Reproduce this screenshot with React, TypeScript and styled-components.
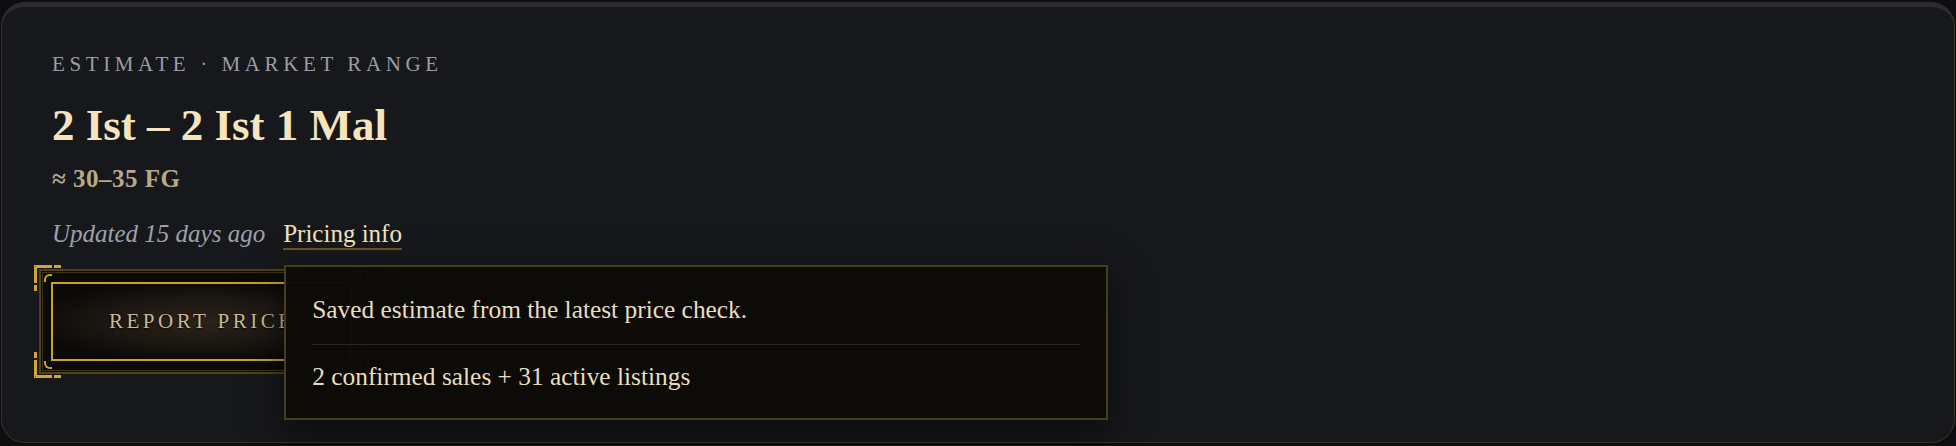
import React from "react";
import styled, { createGlobalStyle } from "styled-components";

const Global = createGlobalStyle`
  html, body { margin: 0; padding: 0; background: #0e0e10; }
  body { font-family: "Liberation Serif", "Times New Roman", serif; }
  * { box-sizing: border-box; }
`;

const Card = styled.section`
  margin: 2px 1px 3px 1px;
  height: 441px;
  background: #17181c;
  border: 1px solid #3a3022;
  border-top: 5px solid #2b2c31;
  border-radius: 24px;
  padding: 45px 50px 0 50px;
  display: flex;
  flex-direction: column;
  align-items: flex-start;
`;

const Eyebrow = styled.div`
  font-size: 21px;
  line-height: 24px;
  letter-spacing: 4.6px;
  color: #9b9da4;
  text-transform: uppercase;
`;

const Title = styled.h1`
  margin: 23px 0 0 0;
  font-size: 45px;
  line-height: 52px;
  font-weight: 700;
  color: #f6e4be;
`;

const Approx = styled.div`
  margin-top: 13px;
  font-size: 25px;
  line-height: 30px;
  font-weight: 700;
  color: #b9a98a;
  letter-spacing: 0.5px;
`;

const MetaRow = styled.div`
  margin-top: 25px;
  display: flex;
  align-items: flex-start;
  gap: 18px;
  font-size: 25px;
  line-height: 30px;
`;

const Updated = styled.span`
  font-style: italic;
  color: #9ea1ab;
`;

const InfoAnchor = styled.span`
  position: relative;
  display: inline-block;
`;

const InfoLink = styled.span`
  display: inline-block;
  line-height: 28px;
  color: #f0e1c1;
  border-bottom: 2px solid #6b5520;
  cursor: help;
`;

const Tooltip = styled.div`
  position: absolute;
  top: calc(100% + 15px);
  left: 1px;
  width: 824px;
  z-index: 5;
  background: rgba(13, 11, 7, 0.98);
  border: 2px solid #4a3c16;
  padding: 26px 26px 26px 26px;
  box-shadow: 0 12px 34px rgba(0, 0, 0, 0.55);
  color: #e9dcc0;
  font-size: 25.4px;
  line-height: 32px;
`;

const TipLine = styled.div`
  white-space: nowrap;
`;

const TipDivider = styled.hr`
  margin: 19px 0 15px 0;
  border: none;
  height: 1px;
  background: #2a251d;
`;

const ButtonWrap = styled.div`
  position: relative;
  margin-top: 15px;
  margin-left: -18px;
  padding: 4px 5px;
`;

const Corner = styled.svg<{ $v: "top" | "bottom"; $h: "left" | "right" }>`
  position: absolute;
  width: 27px;
  height: 26px;
  ${(p) => (p.$v === "top" ? "top: 0;" : "bottom: 0;")}
  ${(p) => (p.$h === "left" ? "left: 0;" : "right: 0;")}
  transform: scale(${(p) => (p.$h === "left" ? 1 : -1)}, ${(p) => (p.$v === "top" ? 1 : -1)});
`;

const OuterFrame = styled.div`
  border: 2px solid #4f411b;
  padding: 1px;
  background: #0f0d0a;
`;

const InnerFrame = styled.div`
  position: relative;
  border: 1px solid #3b3118;
  padding: 9px 8px;
  background: #0c0a07;
  &::before,
  &::after {
    content: "";
    position: absolute;
    left: 1px;
    width: 6px;
    height: 6px;
    border-left: 2px solid #c9a22a;
  }
  &::before {
    top: 1px;
    border-top: 2px solid #c9a22a;
    border-top-left-radius: 6px;
  }
  &::after {
    bottom: 1px;
    border-bottom: 2px solid #c9a22a;
    border-bottom-left-radius: 6px;
  }
`;

const ReportButton = styled.button`
  display: block;
  border: 2px solid #c9a22a;
  height: 79px;
  padding: 0 55px 0 56px;
  background: radial-gradient(ellipse 60% 55% at 50% 50%, #2c231a 0%, #1c1712 55%, #0b0906 100%);
  font-family: "Liberation Serif", "Times New Roman", serif;
  font-size: 21px;
  letter-spacing: 3.5px;
  color: #c8b896;
  text-shadow: 0 1px 2px rgba(0, 0, 0, 0.9);
  text-transform: uppercase;
  cursor: pointer;
`;

function CornerMark({ v, h }: { v: "top" | "bottom"; h: "left" | "right" }) {
  return (
    <Corner $v={v} $h={h} viewBox="0 0 27 26" aria-hidden="true">
      <g fill="#d4a72c">
        <rect x="0" y="0" width="18" height="3" />
        <rect x="20" y="0" width="7" height="3" />
        <rect x="0" y="0" width="3" height="18" />
        <rect x="0" y="20" width="3" height="6" />
      </g>
      <rect x="1" y="1" width="1" height="1" fill="#6b5316" />
    </Corner>
  );
}

export default function App() {
  return (
    <>
      <Global />
      <Card>
        <Eyebrow>Estimate · Market range</Eyebrow>
        <Title>2 Ist – 2 Ist 1 Mal</Title>
        <Approx>≈ 30–35 FG</Approx>
        <MetaRow>
          <Updated>Updated 15 days ago</Updated>
          <InfoAnchor>
            <InfoLink>Pricing info</InfoLink>
            <Tooltip role="tooltip">
              <TipLine>Saved estimate from the latest price check.</TipLine>
              <TipDivider />
              <TipLine>2 confirmed sales + 31 active listings</TipLine>
            </Tooltip>
          </InfoAnchor>
        </MetaRow>
        <ButtonWrap>
          <CornerMark v="top" h="left" />
          <CornerMark v="bottom" h="left" />
          <CornerMark v="top" h="right" />
          <CornerMark v="bottom" h="right" />
          <OuterFrame>
            <InnerFrame>
              <ReportButton>Report Price</ReportButton>
            </InnerFrame>
          </OuterFrame>
        </ButtonWrap>
      </Card>
    </>
  );
}
